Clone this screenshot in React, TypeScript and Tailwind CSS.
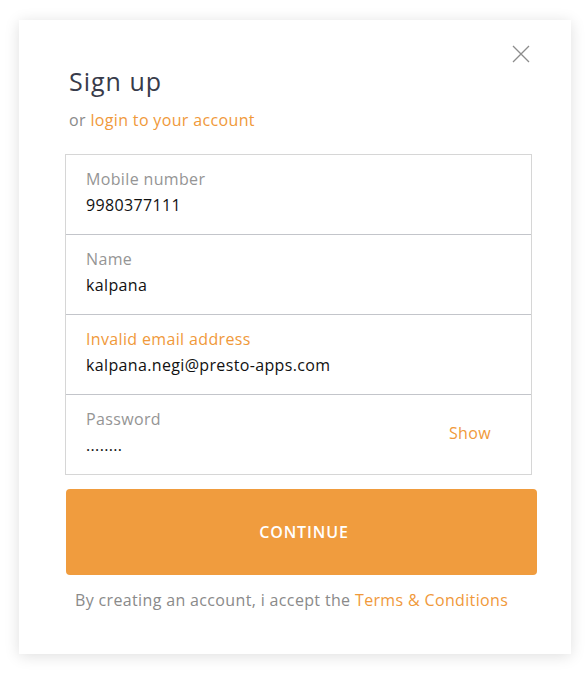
import React from "react";

const fieldFont = { fontFamily: "'Open Sans', 'Liberation Sans', sans-serif" };

interface FieldProps {
  label: string;
  value: string;
  error?: boolean;
  last?: boolean;
  action?: string;
}

const Field: React.FC<FieldProps> = ({ label, value, error, last, action }) => (
  <div
    className={
      "flex items-center justify-between pl-[20px] pr-[40px] " +
      (last ? "h-[79px]" : "h-[80px] border-b border-[#c3c5ca]")
    }
  >
    <div className="mb-[6px] flex flex-col">
      <span
        className={
          "text-[16px] leading-[20px] tracking-[0.35px] " +
          (error ? "text-[#f0993a]" : "text-[#959595]")
        }
      >
        {label}
      </span>
      <span className="mt-[6px] text-[16px] leading-[20px] tracking-[0.35px] text-[#111]">
        {value}
      </span>
    </div>
    {action && (
      <span className="mb-[3px] text-[16px] leading-[20px] tracking-[0.35px] text-[#f0993a]">
        {action}
      </span>
    )}
  </div>
);

export default function App() {
  return (
    <div
      className="h-[683px] w-[587px] bg-white pl-[19px] pt-[20px]"
      style={fieldFont}
    >
      <div className="relative h-[634px] w-[552px] bg-white shadow-[0_2px_14px_rgba(0,0,0,0.13)]">
        {/* close */}
        <button
          type="button"
          className="absolute right-[41px] top-[25px] flex h-[18px] w-[18px] items-center justify-center"
        >
          <svg width="18" height="18" viewBox="0 0 18 18">
            <path
              d="M1 1L17 17M17 1L1 17"
              stroke="#8c8c8c"
              strokeWidth="1.3"
              fill="none"
            />
          </svg>
        </button>

        <div className="pl-[50px] pt-[46px]">
          <h1 className="text-[25px] leading-[30px] tracking-[1px] text-[#383b4a]">
            Sign up
          </h1>
          <p className="mt-[14px] text-[16px] leading-[20px] tracking-[0.35px] text-[#8a8a8a]">
            or <span className="text-[#f0993a]">login to your account</span>
          </p>
        </div>

        <div className="ml-[46px] mt-[24px] w-[467px] border border-[#d6d6d6]">
          <Field label="Mobile number" value="9980377111" />
          <Field label="Name" value="kalpana" />
          <Field
            label="Invalid email address"
            value="kalpana.negi@presto-apps.com"
            error
          />
          <Field label="Password" value="........" action="Show" last />
        </div>

        <button
          type="button"
          className="ml-[47px] mt-[14px] flex h-[86px] w-[471px] items-center justify-center rounded-[4px] bg-[#f09c3e] pl-[5px] text-[16px] font-semibold tracking-[0.9px] text-white"
        >
          CONTINUE
        </button>

        <p className="mt-[15px] pl-[56px] text-[16px] leading-[20px] tracking-[0.35px] text-[#8a8a8a]">
          By creating an account, i accept the{" "}
          <span className="text-[#f0993a]">Terms &amp; Conditions</span>
        </p>
      </div>
    </div>
  );
}
